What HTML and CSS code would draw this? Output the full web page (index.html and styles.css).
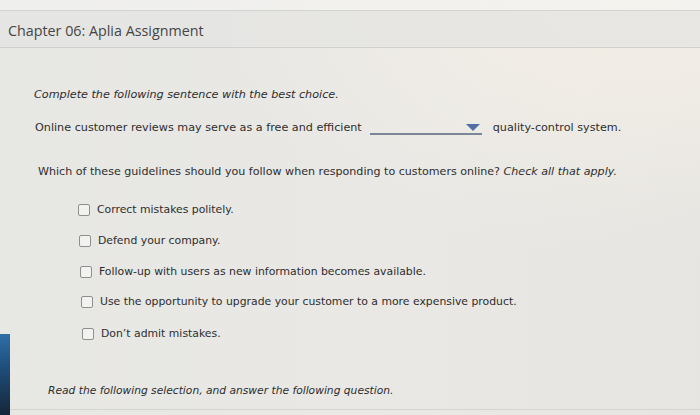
FILE: index.html
```
<!DOCTYPE html>
<html>
<head>
<meta charset="utf-8">
<link rel="stylesheet" href="styles.css">
</head>
<body>
<div class="page">
  <div class="topstrip"></div>
  <div class="header">Chapter 06: Aplia Assignment</div>
  <div class="content">
    <p class="instr">Complete the following sentence with the best choice.</p>
    <div class="sentence">
      <span>Online customer reviews may serve as a free and efficient</span>
      <span class="select"><span class="tri"></span></span>
      <span>quality-control system.</span>
    </div>
    <p class="question">Which of these guidelines should you follow when responding to customers online? <em>Check all that apply.</em></p>
    <ul class="options">
      <li class="o1"><span class="box"></span>Correct mistakes politely.</li>
      <li class="o2"><span class="box"></span>Defend your company.</li>
      <li class="o3"><span class="box"></span>Follow-up with users as new information becomes available.</li>
      <li class="o4"><span class="box"></span>Use the opportunity to upgrade your customer to a more expensive product.</li>
      <li class="o5"><span class="box"></span>Don’t admit mistakes.</li>
    </ul>
    <p class="read">Read the following selection, and answer the following question.</p>
  </div>
  <div class="edge"></div>
  <div class="bottomline"></div>
</div>
</body>
</html>
```
FILE: styles.css
```
html, body {
  margin: 0;
  padding: 0;
}
body {
  width: 700px;
  height: 415px;
  overflow: hidden;
  font-family: "DejaVu Sans", Verdana, sans-serif;
  color: #2e2e2e;
}
.page {
  position: relative;
  width: 700px;
  height: 415px;
  background: radial-gradient(ellipse 420px 260px at 640px 0px, #f4efe6 0%, rgba(244,239,230,0) 100%), linear-gradient(90deg, #e7e7e4 0%, #e9e8e5 60%, #e6e5e2 100%);
}
.topstrip {
  height: 10px;
  background: rgba(245, 245, 243, 0.6);
  border-bottom: 1px solid #d3d3d1;
}
.header {
  height: 37px;
  box-sizing: border-box;
  padding: 10px 0 0 8px;
  font-family: "Open Sans", sans-serif;
  font-size: 14.3px;
  line-height: 20px;
  color: #454545;
  background: rgba(228, 228, 226, 0.7);
  border-bottom: 1px solid #d0d0ce;
}
.content {
  padding: 40px 0 0 34px;
  font-size: 11.2px;
  line-height: 13px;
}
.instr {
  margin: 0;
  font-style: italic;
}
.sentence {
  display: flex;
  align-items: flex-start;
  margin-top: 20px;
  padding-left: 1px;
}
.select {
  position: relative;
  width: 112px;
  height: 12px;
  margin: 0 11px 0 8px;
  border-bottom: 2px solid #7b8798;
}
.tri {
  position: absolute;
  right: 2px;
  top: 3px;
  width: 0;
  height: 0;
  border-left: 7px solid transparent;
  border-right: 7px solid transparent;
  border-top: 7px solid #4f6fa6;
}
.question {
  margin: 30px 0 0 4px;
  font-size: 11.1px;
}
.question em {
  font-style: italic;
}
.options {
  list-style: none;
  margin: 25px 0 0 44px;
  padding: 0;
  font-size: 10.85px;
}
.options li {
  display: flex;
  align-items: center;
  height: 13px;
  margin-bottom: 18px;
}
.options .o2 { margin-left: 1px; }
.options .o3 { margin-left: 2px; margin-bottom: 17px; }
.options .o4 { margin-left: 3px; margin-bottom: 19px; }
.options .o5 { margin-left: 4px; margin-bottom: 0; }
.box {
  width: 10px;
  height: 10px;
  border: 1px solid #8f8f8f;
  border-radius: 2px;
  background: #f2f2f0;
  margin-right: 7px;
  flex: none;
}
.read {
  margin: 44px 0 0 14px;
  font-style: italic;
  font-size: 10.7px;
}
.edge {
  position: absolute;
  left: 0;
  top: 334px;
  width: 10px;
  height: 81px;
  background: linear-gradient(180deg, #2f6fa8 0%, #1f4f7c 40%, #14263a 100%);
}
.bottomline {
  position: absolute;
  left: 10px;
  right: 0;
  top: 409px;
  height: 1px;
  background: #d4d4d1;
}
```
